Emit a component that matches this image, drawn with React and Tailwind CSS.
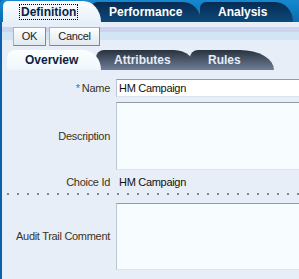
export default function App() {
  const lbl = "shrink-0 text-[11px] tracking-[-0.3px] text-[#3a3322] leading-[13px]";
  const box = "shrink-0 ml-[6px] w-[200px] border border-[#bcc6ce] border-t-[#8f9ca7] border-b-[#dde4ea]";
  return (
    <div className="w-[299px] h-[279px] overflow-hidden flex flex-col bg-[#0c60ac] font-['Liberation_Sans',Arial,sans-serif]">
      {/* top tabs */}
      <div className="h-[22px] shrink-0 flex items-end pl-[3px] bg-[linear-gradient(to_bottom,#1689ce,#0a6db3)] rounded-tl-[4px]">
        <div className="relative z-20 shrink-0 h-[21px] w-[98px] pl-[18px] flex items-center rounded-tl-[5px] rounded-tr-[18px_21px] bg-[linear-gradient(to_bottom,#fbfdff,#e8f0f8)]">
          <span className="text-[12px] font-bold text-[#0a1e46] leading-[12px] outline outline-1 outline-dotted outline-black outline-offset-[1px]">
            Definition
          </span>
        </div>
        <div className="relative z-10 shrink-0 -ml-[10px] h-[20px] w-[110px] pl-[18px] flex items-center rounded-tl-[6px] rounded-tr-[18px_20px] bg-[linear-gradient(to_bottom,#062c54,#0f4878)] text-white text-[12px] font-bold leading-[12px]">
          Performance
        </div>
        <div className="relative shrink-0 -ml-[1px] h-[20px] w-[93px] pl-[18px] flex items-center rounded-tl-[6px] rounded-tr-[18px_20px] bg-[linear-gradient(to_bottom,#062c54,#0f4878)] text-white text-[12px] font-bold leading-[12px]">
          Analysis
        </div>
      </div>

      <div className="flex-1 ml-[2px] bg-[#e7eef7] flex flex-col">
        {/* toolbar */}
        <div className="h-[26px] shrink-0 flex items-start gap-[3px] pl-[11px] pt-[5px] bg-[linear-gradient(to_bottom,#e6eef8_0px,#e6eef8_5px,#cfd4ee_5px,#cfd4ee_10px,#d2e5f5_10px,#d2e5f5_18px,#e7eef7_18px)]">
          <div className="h-[19px] w-[33px] flex items-center justify-center border border-[#a9b2bb] border-r-[#7f8993] border-b-[#7f8993] bg-[linear-gradient(to_bottom,#fdfeff,#e2e8ee)] text-[11px] tracking-[-0.3px] text-[#1c1c1c]">
            OK
          </div>
          <div className="h-[19px] w-[51px] flex items-center justify-center border border-[#a9b2bb] border-r-[#7f8993] border-b-[#7f8993] bg-[linear-gradient(to_bottom,#fdfeff,#e2e8ee)] text-[11px] tracking-[-0.3px] text-[#1c1c1c]">
            Cancel
          </div>
        </div>

        {/* sub tabs */}
        <div className="h-[22px] shrink-0 flex items-end pl-[5px]">
          <div className="relative z-20 shrink-0 h-[20px] w-[94px] pl-[18px] flex items-center rounded-tl-[8px] rounded-tr-[18px_20px] bg-[linear-gradient(to_bottom,#fcfeff,#eff6fb)] text-[12px] font-bold text-[#0b1f40] leading-[12px]">
            Overview
          </div>
          <div className="relative z-10 shrink-0 -ml-[5px] h-[20px] w-[100px] pl-[18px] flex items-center rounded-tl-[8px] rounded-tr-[22px_20px] bg-[linear-gradient(to_bottom,#28323f,#6f7e97)] text-[12px] font-bold text-[#e6edf7] leading-[12px]">
            Attributes
          </div>
          <div className="relative shrink-0 -ml-[6px] h-[20px] w-[84px] pl-[18px] flex items-center rounded-tl-[8px] rounded-tr-[34px_20px] bg-[linear-gradient(to_bottom,#28323f,#6f7e97)] text-[12px] font-bold text-[#e6edf7] leading-[12px]">
            Rules
          </div>
        </div>

        {/* form */}
        <div className="flex flex-col pt-[9px]">
          <div className="flex items-center">
            <div className={`w-[108px] text-right ${lbl}`}>
              <span className="text-[#3a6ec0] mr-[2px]">*</span>Name
            </div>
            <div className={`${box} h-[18px] bg-white flex items-center pl-[2px] text-[11px] tracking-[-0.3px] text-[#111]`}>
              HM Campaign
            </div>
          </div>

          <div className="flex items-center mt-[5px]">
            <div className={`w-[108px] text-right ${lbl}`}>Description</div>
            <div className={`${box} h-[68px] bg-[#f7fdff]`} />
          </div>

          <div className="flex items-center mt-[5px] h-[14px]">
            <div className={`w-[108px] text-right ${lbl}`}>Choice Id</div>
            <div className="shrink-0 ml-[6px] pl-[3px] text-[11px] tracking-[-0.3px] text-[#111] leading-[13px]">HM Campaign</div>
          </div>

          <div className="mt-[4px] ml-[5px] h-[2px] bg-[linear-gradient(to_right,#7e8891_2px,transparent_2px)] bg-[length:10px_2px] bg-repeat-x" />

          <div className="flex items-center mt-[8px]">
            <div className={`w-[108px] text-right ${lbl}`}>Audit Trail Comment</div>
            <div className={`${box} h-[67px] bg-[#f7fdff]`} />
          </div>
        </div>
      </div>
    </div>
  );
}
